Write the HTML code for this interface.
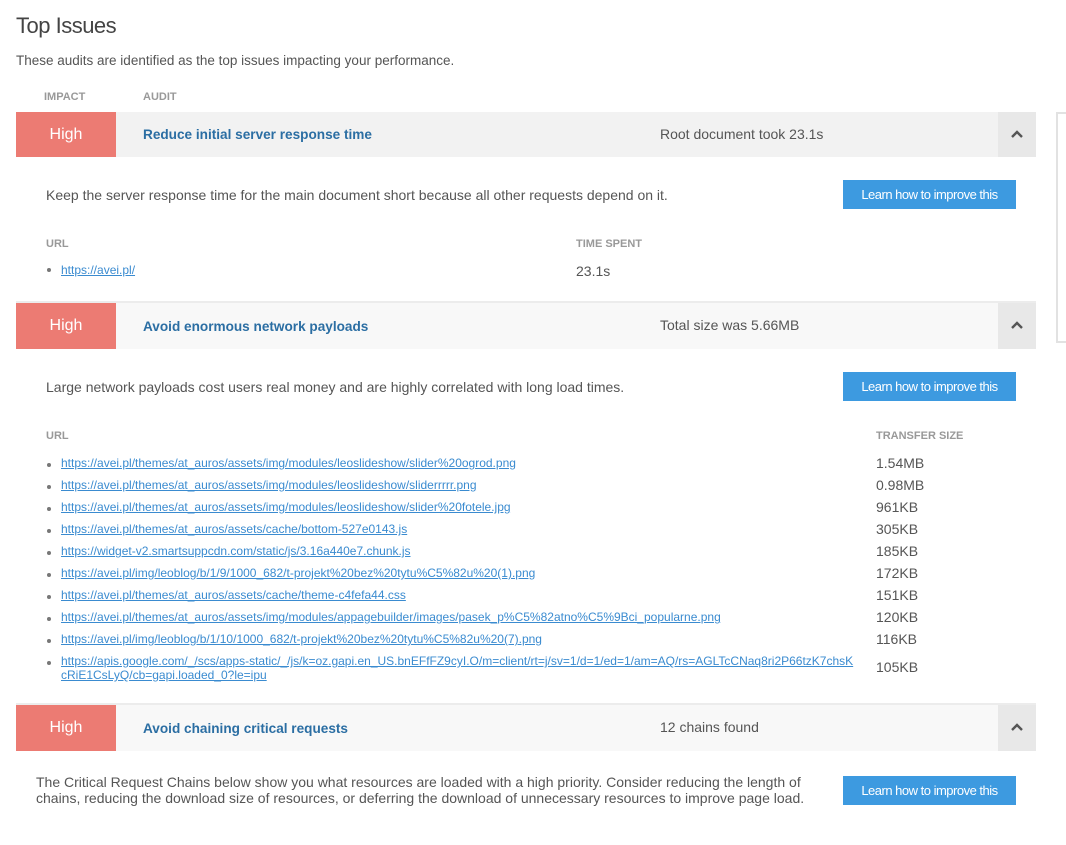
<!DOCTYPE html>
<html><head><meta charset="utf-8"><style>
*{margin:0;padding:0;box-sizing:border-box}
body{width:1066px;height:845px;background:#fff;font-family:"Liberation Sans",sans-serif;color:#555;position:relative;overflow:hidden}
.a{position:absolute;white-space:nowrap}
h1{position:absolute;left:16px;top:13px;font-size:22px;font-weight:normal;color:#444;letter-spacing:-0.5px}
.th{font-size:11px;font-weight:bold;color:#999}
.bar{position:absolute;left:16px;width:1020px;height:46px;background:#f2f2f2}
.bar.l{background:#f8f8f8;border-top:2px solid #ececec}
.hi{position:absolute;left:0;top:0;width:100px;height:100%;background:#ec7b73;color:#fff;font-size:16px;text-align:center;line-height:46px}
.tt{position:absolute;left:127px;top:14px;font-size:13.6px;font-weight:bold;color:#2b6ea3}
.sm{position:absolute;left:644px;top:14px;font-size:14px;color:#555}
.ch{position:absolute;right:0;top:0;width:38px;height:100%;background:#e8e8e8}
.ch svg{position:absolute;left:13px;top:18px}
.btn{position:absolute;left:843px;width:173px;height:29px;background:#3d9ae0;color:#fff;font-size:13px;text-align:center;line-height:29px;letter-spacing:-0.5px}
.d{font-size:14px;color:#555}
.u{position:absolute;left:61px;font-size:12px;color:#3a8bd0;text-decoration:underline;white-space:nowrap}
.b{position:absolute;left:47px;width:4px;height:4px;border-radius:2px;background:#777}
.s{position:absolute;left:876px;font-size:14px;color:#555}
</style></head><body>
<h1>Top Issues</h1>
<div class="a d" style="left:16px;top:53px;font-size:13.5px">These audits are identified as the top issues impacting your performance.</div>
<div class="a th" style="left:44px;top:91px">IMPACT</div>
<div class="a th" style="left:143px;top:91px">AUDIT</div>
<div style="position:absolute;left:1056px;top:112px;width:14px;height:231px;border:2px solid #e2e2e2;border-right:none"></div>

<div class="bar" style="top:112px;height:45px"><div class="hi" style="line-height:45px">High</div><div class="tt" style="top:15px">Reduce initial server response time</div><div class="sm">Root document took 23.1s</div><div class="ch"><svg width="12" height="8"><path d="M1 7L6 2L11 7" stroke="#555" stroke-width="2.4" fill="none"/></svg></div></div>
<div class="a d" style="left:46px;top:187px">Keep the server response time for the main document short because all other requests depend on it.</div>
<div class="btn" style="top:180px">Learn how to improve this</div>
<div class="a th" style="left:46px;top:238px">URL</div>
<div class="a th" style="left:576px;top:238px">TIME SPENT</div>
<div class="b" style="top:268px"></div><div class="u" style="top:263px">https://avei.pl/</div>
<div class="a d" style="left:576px;top:263px">23.1s</div>

<div class="bar l" style="top:301px;height:48px"><div class="hi">High</div><div class="tt" style="top:16px">Avoid enormous network payloads</div><div class="sm">Total size was 5.66MB</div><div class="ch"><svg width="12" height="8"><path d="M1 7L6 2L11 7" stroke="#555" stroke-width="2.4" fill="none"/></svg></div></div>
<div class="a d" style="left:46px;top:379px">Large network payloads cost users real money and are highly correlated with long load times.</div>
<div class="btn" style="top:372px">Learn how to improve this</div>
<div class="a th" style="left:46px;top:430px">URL</div>
<div class="a th" style="left:876px;top:430px">TRANSFER SIZE</div>

<div class="b" style="top:463px"></div><div class="u" style="top:456px">https://avei.pl/themes/at_auros/assets/img/modules/leoslideshow/slider%20ogrod.png</div><div class="s" style="top:455px">1.54MB</div>
<div class="b" style="top:485px"></div><div class="u" style="top:478px">https://avei.pl/themes/at_auros/assets/img/modules/leoslideshow/sliderrrrr.png</div><div class="s" style="top:477px">0.98MB</div>
<div class="b" style="top:507px"></div><div class="u" style="top:500px">https://avei.pl/themes/at_auros/assets/img/modules/leoslideshow/slider%20fotele.jpg</div><div class="s" style="top:499px">961KB</div>
<div class="b" style="top:529px"></div><div class="u" style="top:522px">https://avei.pl/themes/at_auros/assets/cache/bottom-527e0143.js</div><div class="s" style="top:521px">305KB</div>
<div class="b" style="top:551px"></div><div class="u" style="top:544px">https://widget-v2.smartsuppcdn.com/static/js/3.16a440e7.chunk.js</div><div class="s" style="top:543px">185KB</div>
<div class="b" style="top:573px"></div><div class="u" style="top:566px">https://avei.pl/img/leoblog/b/1/9/1000_682/t-projekt%20bez%20tytu%C5%82u%20(1).png</div><div class="s" style="top:565px">172KB</div>
<div class="b" style="top:595px"></div><div class="u" style="top:588px">https://avei.pl/themes/at_auros/assets/cache/theme-c4fefa44.css</div><div class="s" style="top:587px">151KB</div>
<div class="b" style="top:617px"></div><div class="u" style="top:610px">https://avei.pl/themes/at_auros/assets/img/modules/appagebuilder/images/pasek_p%C5%82atno%C5%9Bci_popularne.png</div><div class="s" style="top:609px">120KB</div>
<div class="b" style="top:639px"></div><div class="u" style="top:632px">https://avei.pl/img/leoblog/b/1/10/1000_682/t-projekt%20bez%20tytu%C5%82u%20(7).png</div><div class="s" style="top:631px">116KB</div>
<div class="b" style="top:661px"></div><div class="u" style="top:654px;line-height:14px">https://apis.google.com/_/scs/apps-static/_/js/k=oz.gapi.en_US.bnEFfFZ9cyI.O/m=client/rt=j/sv=1/d=1/ed=1/am=AQ/rs=AGLTcCNaq8ri2P66tzK7chsK<br>cRiE1CsLyQ/cb=gapi.loaded_0?le=ipu</div><div class="s" style="top:659px">105KB</div>

<div class="bar l" style="top:703px;height:48px"><div class="hi">High</div><div class="tt" style="top:16px">Avoid chaining critical requests</div><div class="sm">12 chains found</div><div class="ch"><svg width="12" height="8"><path d="M1 7L6 2L11 7" stroke="#555" stroke-width="2.4" fill="none"/></svg></div></div>
<div class="a d" style="left:36px;top:774px;line-height:16px">The Critical Request Chains below show you what resources are loaded with a high priority. Consider reducing the length of<br>chains, reducing the download size of resources, or deferring the download of unnecessary resources to improve page load.</div>
<div class="btn" style="top:776px">Learn how to improve this</div>
</body></html>
